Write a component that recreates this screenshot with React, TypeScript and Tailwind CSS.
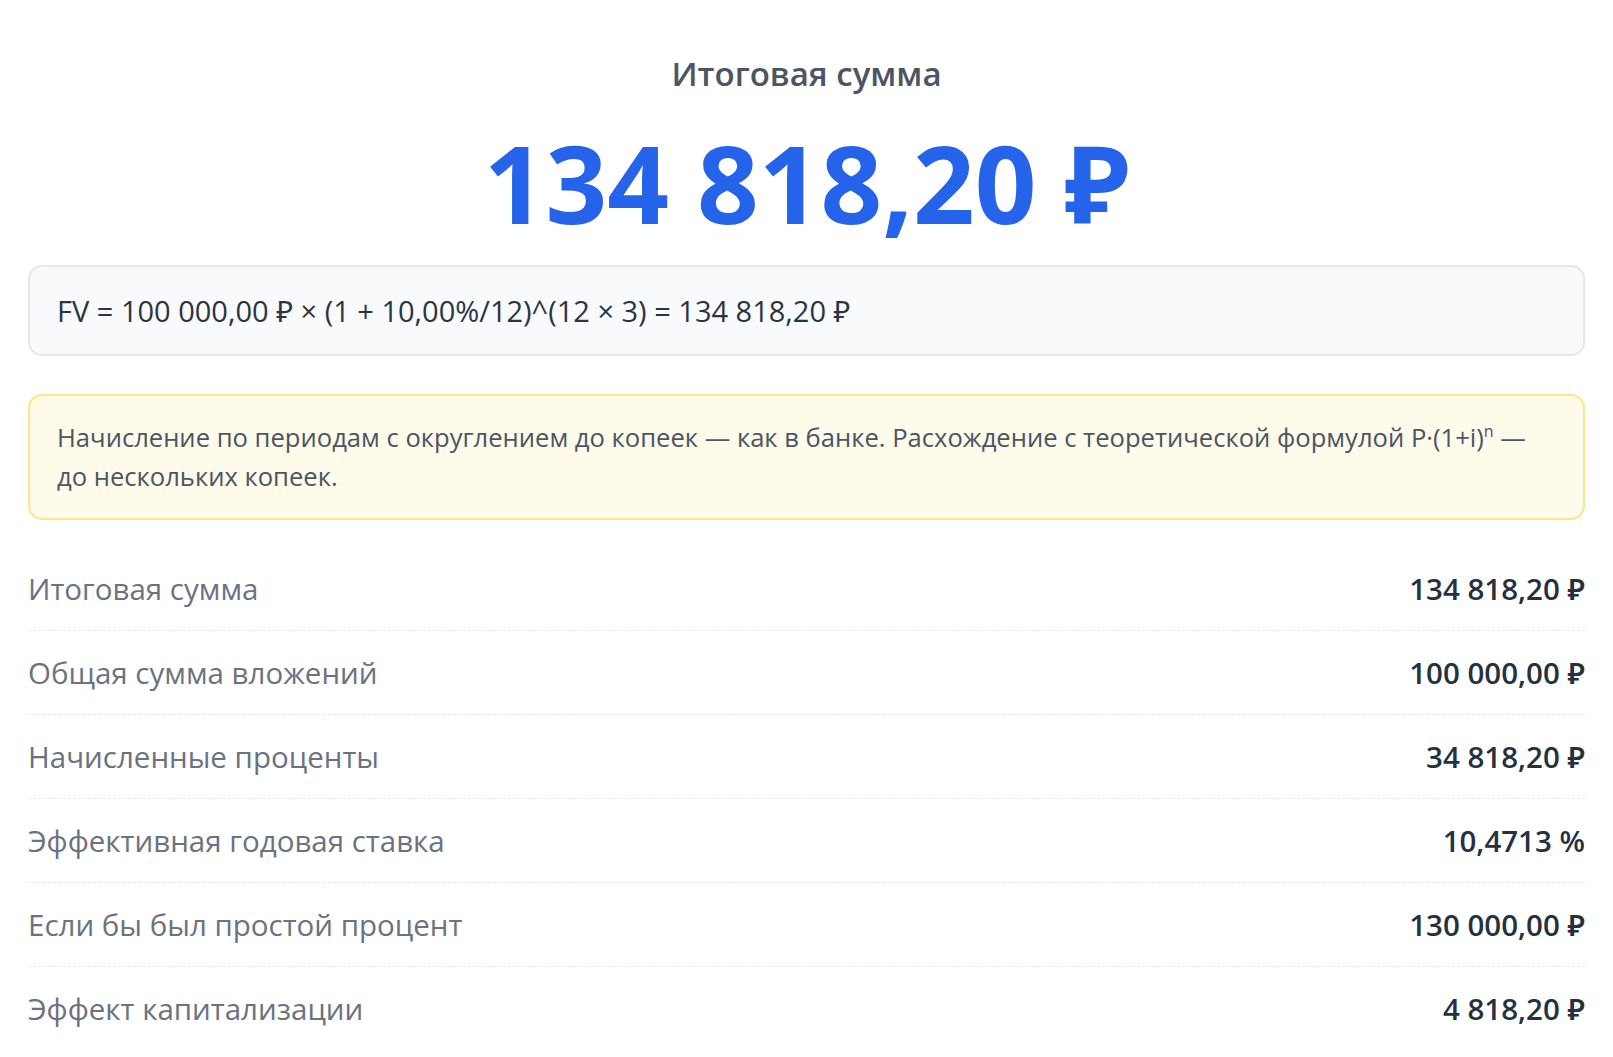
import React from "react";

const rows = [
  { label: "Итоговая сумма", value: "134 818,20 ₽" },
  { label: "Общая сумма вложений", value: "100 000,00 ₽" },
  { label: "Начисленные проценты", value: "34 818,20 ₽" },
  { label: "Эффективная годовая ставка", value: "10,4713 %" },
  { label: "Если бы был простой процент", value: "130 000,00 ₽" },
  { label: "Эффект капитализации", value: "4 818,20 ₽" },
];

const App = () => {
  return (
    <div
      className="min-h-screen bg-white px-[28px] pt-[50px]"
      style={{ fontFamily: '"Open Sans", "Noto Sans", sans-serif' }}
    >
      {/* Headline total */}
      <h2 className="text-center text-[33px] leading-[48px] font-semibold text-[#4b5563]">
        Итоговая сумма
      </h2>
      <div className="mt-[31px] text-center text-[108px] leading-none font-bold text-[#2563eb]">
        134 818,20 ₽
      </div>

      {/* Formula */}
      <div className="mt-[28px] rounded-[14px] border-2 border-[#e5e7eb] bg-[#f8fafc] px-[27px] py-[22px] text-[29px] leading-[43px] text-[#2b3442]">
        FV = 100 000,00 ₽ × (1 + 10,00%/12)^(12 × 3) = 134 818,20 ₽
      </div>

      {/* Rounding note */}
      <div className="mt-[38px] rounded-[14px] border-2 border-[#fde68a] bg-[#fefbea] px-[27px] py-[22px] text-[25.6px] leading-[39px] text-[#4b5563]">
        Начисление по периодам с округлением до копеек — как в банке.
        Расхождение с теоретической формулой P·(1+i)
        <span className="relative -top-[10px] text-[16px] leading-none">n</span>{" "}
        — до нескольких копеек.
      </div>

      {/* Breakdown */}
      <div className="mt-[27px]">
        {rows.map((row, i) => (
          <div
            key={row.label}
            className={
              "flex items-center justify-between py-[19px] " +
              (i < rows.length - 1 ? "border-b border-dashed border-[#e5e7eb]" : "")
            }
          >
            <span className="text-[29.5px] leading-[45px] text-[#6b7280]">
              {row.label}
            </span>
            <span className="text-[29.5px] leading-[45px] font-semibold text-[#263140]">
              {row.value}
            </span>
          </div>
        ))}
      </div>
    </div>
  );
};

export default App;
